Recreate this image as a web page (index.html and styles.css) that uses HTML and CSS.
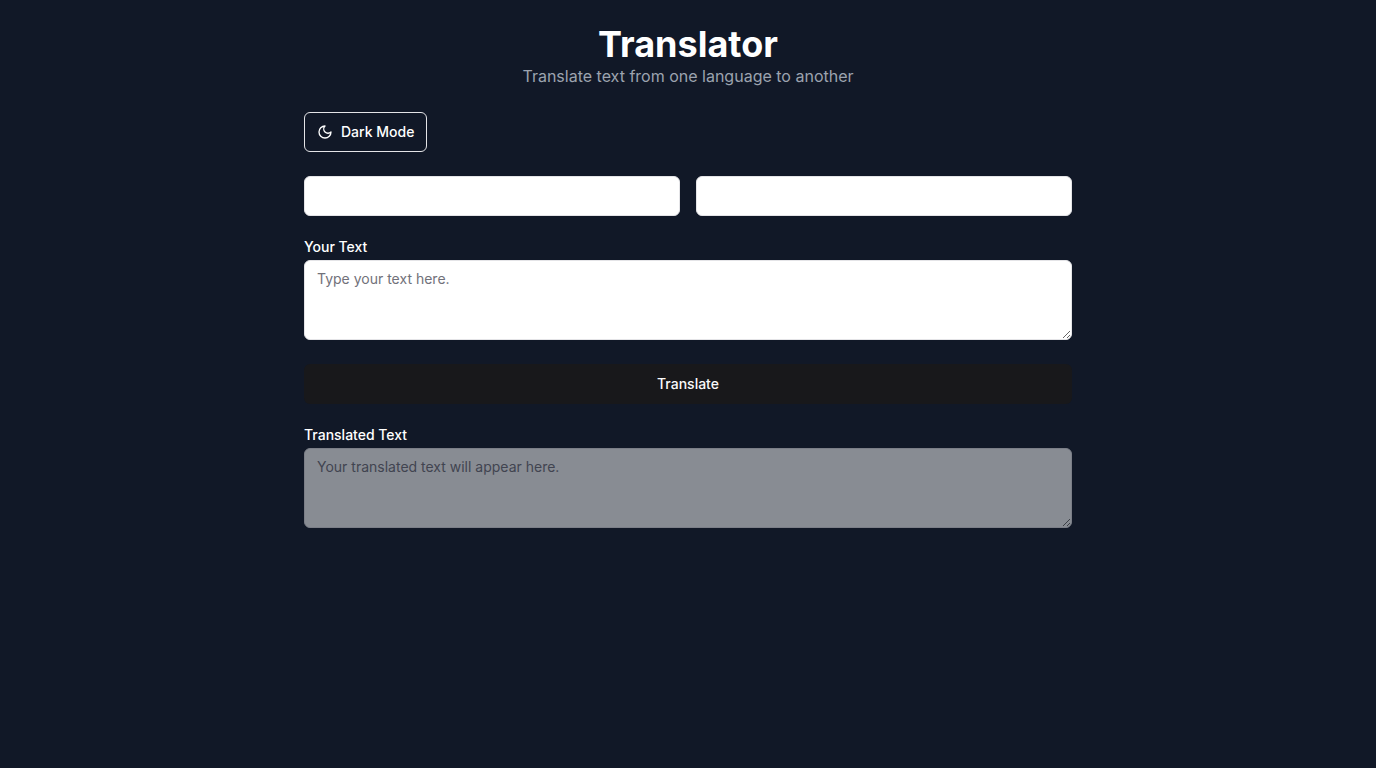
FILE: index.html
```html
<!DOCTYPE html>
<html lang="en">
<head>
<meta charset="utf-8">
<meta name="viewport" content="width=device-width, initial-scale=1">
<title>Translator</title>
<link rel="stylesheet" href="styles.css">
</head>
<body>
<main class="container">
  <header class="header">
    <h1 class="title">Translator</h1>
    <p class="subtitle">Translate text from one language to another</p>
  </header>
  <button type="button" class="button button-outline">
    <svg class="icon" viewBox="0 0 24 24" fill="none" stroke="currentColor" stroke-width="2" stroke-linecap="round" stroke-linejoin="round" aria-hidden="true"><path d="M12 3a6 6 0 0 0 9 9 9 9 0 1 1-9-9Z"/></svg>
    Dark Mode
  </button>
  <form class="form">
    <div class="languages">
      <select class="control select" aria-label="Source language"></select>
      <select class="control select" aria-label="Target language"></select>
    </div>
    <div class="field">
      <label class="label" for="source">Your Text</label>
      <textarea class="control textarea" id="source" placeholder="Type your text here."></textarea>
    </div>
    <button type="button" class="button button-primary">Translate</button>
    <div class="field">
      <label class="label" for="result">Translated Text</label>
      <textarea class="control textarea" id="result" placeholder="Your translated text will appear here." disabled></textarea>
    </div>
  </form>
</main>
</body>
</html>
```
FILE: styles.css
```css
*, *::before, *::after { box-sizing: border-box; }
body {
  margin: 0;
  min-height: 100vh;
  background: #111827;
  color: #fff;
  font-family: Inter, sans-serif;
  font-size: 16px;
  line-height: 24px;
}
.container {
  max-width: 800px;
  margin: 0 auto;
  padding: 24px 16px;
}
.header { margin-bottom: 24px; text-align: center; }
.title { margin: 0; font-size: 36px; line-height: 40px; font-weight: 700; }
.subtitle { margin: 0; color: #9ca3af; }
.button {
  display: flex;
  align-items: center;
  justify-content: center;
  gap: 8px;
  height: 40px;
  padding: 0 12px;
  border: 1px solid transparent;
  border-radius: 6px;
  color: #fff;
  font: 500 14px/20px Inter, sans-serif;
}
.button-outline { border-color: #e4e4e7; background: transparent; }
.button-primary { width: 100%; border: 0; background: #18181b; color: #fafafa; }
.icon { width: 16px; height: 16px; }
.form { display: flex; flex-direction: column; gap: 24px; margin-top: 24px; }
.languages { display: grid; grid-template-columns: 1fr 1fr; gap: 16px; }
.control {
  display: block;
  width: 100%;
  border: 1px solid #e4e4e7;
  border-radius: 6px;
  background: #fff;
  color: #09090b;
  font: 400 14px/20px Inter, sans-serif;
}
.select { height: 40px; padding: 8px 12px; appearance: none; }
.textarea { height: 80px; padding: 8px 12px; }
.textarea::placeholder { color: #71717a; }
.textarea:disabled { opacity: 0.5; }
.field { display: flex; flex-direction: column; gap: 6px; }
.label { font-size: 14px; line-height: 14px; font-weight: 500; }
```
